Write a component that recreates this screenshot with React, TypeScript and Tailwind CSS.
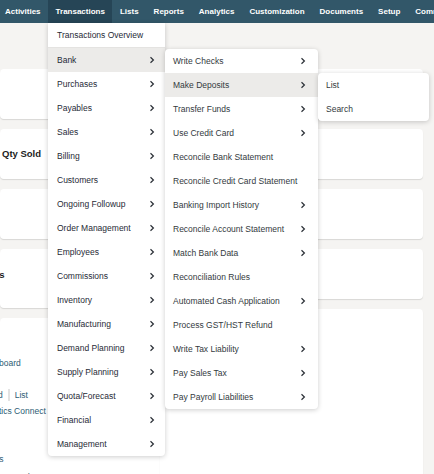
const navItems = ['Activities', 'Transactions', 'Lists', 'Reports', 'Analytics', 'Customization', 'Documents', 'Setup', 'Commerce'];

const txMenu = [
  'Bank', 'Purchases', 'Payables', 'Sales', 'Billing', 'Customers', 'Ongoing Followup', 'Order Management',
  'Employees', 'Commissions', 'Inventory', 'Manufacturing', 'Demand Planning', 'Supply Planning',
  'Quota/Forecast', 'Financial', 'Management',
];

const bankMenu: [string, boolean][] = [
  ['Write Checks', true],
  ['Make Deposits', true],
  ['Transfer Funds', true],
  ['Use Credit Card', true],
  ['Reconcile Bank Statement', false],
  ['Reconcile Credit Card Statement', false],
  ['Banking Import History', true],
  ['Reconcile Account Statement', true],
  ['Match Bank Data', true],
  ['Reconciliation Rules', false],
  ['Automated Cash Application', true],
  ['Process GST/HST Refund', false],
  ['Write Tax Liability', true],
  ['Pay Sales Tax', true],
  ['Pay Payroll Liabilities', true],
];

function Chevron() {
  return (
    <svg width="6" height="8" viewBox="0 0 6 8" className="shrink-0">
      <polyline points="1.5,1.2 4.4,4 1.5,6.8" fill="none" stroke="#2a2f36" strokeWidth="1.2" />
    </svg>
  );
}

function Card({ h, children }: { h: string; children?: React.ReactNode }) {
  return (
    <div className={`${h} bg-white rounded-[4px] shadow-[0_1px_1px_rgba(0,0,0,0.12)] relative overflow-hidden`}>
      {children}
    </div>
  );
}

export default function App() {
  return (
    <div className="w-[434px] h-[474px] overflow-hidden relative bg-[#f5f4f2] font-['Liberation_Sans',Arial,sans-serif]">
      {/* top nav */}
      <div className="h-[23px] bg-[#325769] flex items-stretch -ml-[2.5px] whitespace-nowrap">
        {navItems.map((n) => (
          <div
            key={n}
            className={`px-[7.5px] flex items-center text-[8px] font-bold text-white ${n === 'Transactions' ? 'bg-[#264556]' : ''}`}
          >
            {n}
          </div>
        ))}
      </div>

      {/* dashboard cards */}
      <div className="grid grid-cols-[160px_263px] pt-[46px] pr-[11px]">
        <div className="flex flex-col gap-[10px]">
          <Card h="h-[50px]" />
          <Card h="h-[50px]">
            <div className="pt-[19px] pl-[2px] text-[9.5px] leading-[12px] font-bold text-[#1c1c1c]">Qty Sold</div>
          </Card>
          <Card h="h-[50px]" />
          <Card h="h-[59px]">
            <div className="pt-[20px] -ml-[4px] text-[9.5px] leading-[12px] font-bold text-[#1c1c1c]">ts</div>
          </Card>
          <Card h="h-[200px]">
            <div className="text-[8.5px] text-[#2c5c74] leading-[11px]">
              <div className="pt-[40px] -ml-[1px]">board</div>
              <div className="mt-[20px] flex items-center -ml-[2px]">
                <span>d</span>
                <span className="mx-[5px] w-[2px] h-[12px] bg-[#e3e3e3]" />
                <span>List</span>
              </div>
              <div className="mt-[5px] -ml-[1px]">tics Connect</div>
              <div className="mt-[37px] -ml-[3px]">ts</div>
              <div className="mt-[7px] -ml-[2px]">kup Codes</div>
            </div>
          </Card>
        </div>
        <div className="flex flex-col gap-[10px]">
          <Card h="h-[50px]" />
          <Card h="h-[50px]" />
          <Card h="h-[50px]" />
          <Card h="h-[50px]" />
          <Card h="h-[200px]" />
        </div>
      </div>

      {/* Transactions menu */}
      <div className="absolute left-[48px] top-[23px] w-[117px] bg-white rounded-b-[4px] shadow-[0_1px_5px_rgba(0,0,0,0.2)] text-[8.5px] text-[#1f2a36] whitespace-nowrap">
        <div className="h-[25px] flex items-center pl-[9px] border-b border-[#e4e3e1]">Transactions Overview</div>
        {txMenu.map((m) => (
          <div
            key={m}
            className={`h-[24px] flex items-center justify-between pl-[9px] pr-[10px] ${m === 'Bank' ? 'bg-[#ecebe9]' : ''}`}
          >
            <span>{m}</span>
            <Chevron />
          </div>
        ))}
      </div>

      {/* Bank submenu */}
      <div className="absolute left-[165px] top-[49px] w-[153px] bg-white rounded-[4px] shadow-[0_1px_5px_rgba(0,0,0,0.2)] text-[8.5px] text-[#333a40] whitespace-nowrap">
        {bankMenu.map(([m, sub]) => (
          <div
            key={m}
            className={`h-[24px] flex items-center justify-between pl-[8px] pr-[12px] ${m === 'Make Deposits' ? 'bg-[#ecebe9]' : ''}`}
          >
            <span>{m}</span>
            {sub && <Chevron />}
          </div>
        ))}
      </div>

      {/* Make Deposits submenu */}
      <div className="absolute left-[318px] top-[73px] w-[111px] bg-white rounded-[4px] shadow-[0_1px_5px_rgba(0,0,0,0.2)] text-[8.5px] text-[#333a40]">
        <div className="h-[24px] flex items-center pl-[8px]">List</div>
        <div className="h-[24px] flex items-center pl-[8px]">Search</div>
      </div>
    </div>
  );
}
